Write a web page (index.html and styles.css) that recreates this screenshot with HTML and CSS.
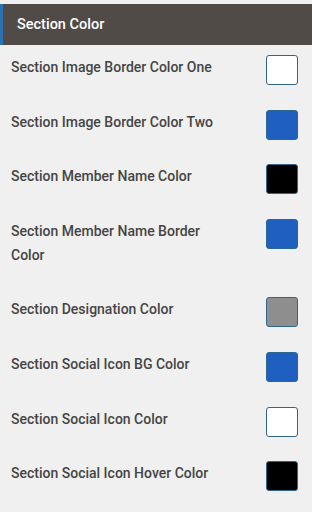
FILE: index.html
```html
<!DOCTYPE html>
<html>
<head>
<meta charset="utf-8">
<link rel="stylesheet" href="styles.css">
</head>
<body>
<div class="panel">
  <div class="header"><span>Section Color</span></div>
  <div class="list">
    <div class="row"><div class="label">Section Image Border Color One</div><div class="swatch white"></div></div>
    <div class="row"><div class="label">Section Image Border Color Two</div><div class="swatch blue"></div></div>
    <div class="row"><div class="label">Section Member Name Color</div><div class="swatch black"></div></div>
    <div class="row"><div class="label">Section Member Name Border Color</div><div class="swatch blue"></div></div>
    <div class="row"><div class="label">Section Designation Color</div><div class="swatch gray"></div></div>
    <div class="row"><div class="label">Section Social Icon BG Color</div><div class="swatch blue"></div></div>
    <div class="row"><div class="label">Section Social Icon Color</div><div class="swatch white"></div></div>
    <div class="row"><div class="label">Section Social Icon Hover Color</div><div class="swatch black"></div></div>
  </div>
</div>
</body>
</html>
```
FILE: styles.css
```css
html, body {
  margin: 0;
  padding: 0;
  background: #f0f0f0;
}
body {
  font-family: Roboto, "Liberation Sans", sans-serif;
  width: 312px;
  height: 512px;
  overflow: hidden;
}
.panel {
  padding-top: 4px;
}
.header {
  height: 41px;
  background: #514b48;
  border-left: 3px solid #2a72b0;
  display: flex;
  align-items: center;
  padding-left: 14px;
  color: #ffffff;
  font-size: 14.5px;
  font-weight: 500;
}
.list {
  display: flex;
  flex-direction: column;
  gap: 24.6px;
  padding: 10px 14px 0 11px;
}
.row {
  display: flex;
  justify-content: space-between;
  align-items: flex-start;
}
.label {
  width: 205px;
  font-size: 14px;
  font-weight: 500;
  line-height: 24px;
  color: #454545;
  padding-bottom: 6px;
}
.swatch {
  width: 30px;
  height: 28px;
  border: 1px solid #2d6690;
  border-radius: 3px;
  flex: none;
}
.white { background: #ffffff; }
.blue { background: #1f5fbf; }
.black { background: #000000; }
.gray { background: #8e8e8e; }
```
